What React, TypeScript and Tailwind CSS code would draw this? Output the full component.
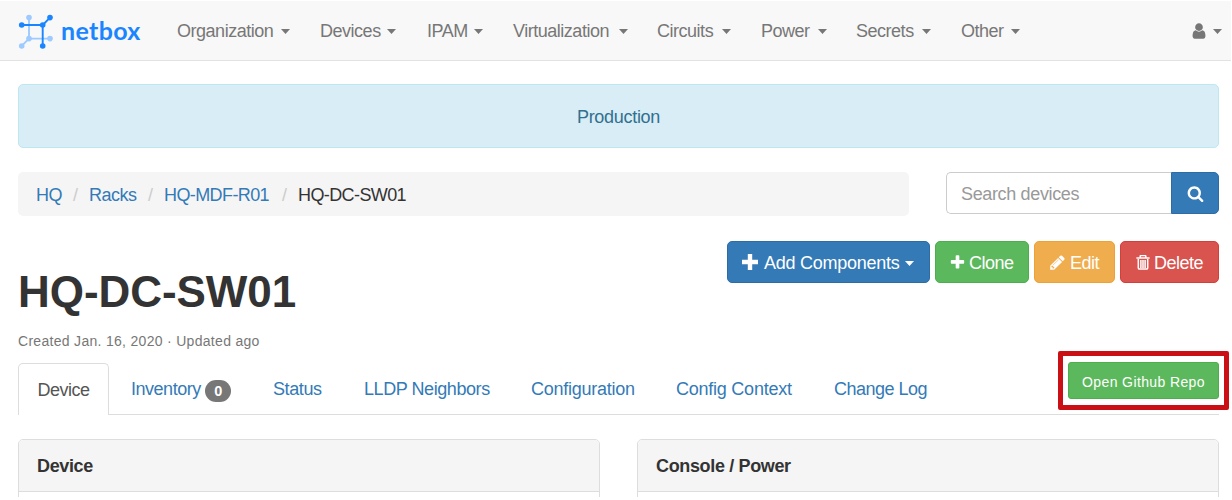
import React from "react";

const plusPath =
  "M1600 736v192q0 40-28 68t-68 28h-416v416q0 40-28 68t-68 28h-192q-40 0-68-28t-28-68v-416h-416q-40 0-68-28t-28-68v-192q0-40 28-68t68-28h416v-416q0-40 28-68t68-28h192q40 0 68 28t28 68v416h416q40 0 68 28t28 68z";
const userPath =
  "M1536 1399q0 109-62.5 187t-150.5 78h-854q-88 0-150.5-78t-62.5-187q0-85 8.5-160.5t31.5-152 58.5-131 94-89 134.5-34.5q131 128 313 128t313-128q76 0 134.5 34.5t94 89 58.5 131 31.5 152 8.5 160.5zm-256-887q0 159-112.5 271.5t-271.5 112.5-271.5-112.5-112.5-271.5 112.5-271.5 271.5-112.5 271.5 112.5 112.5 271.5z";
const searchPath =
  "M1216 832q0-185-131.5-316.5t-316.5-131.5-316.5 131.5-131.5 316.5 131.5 316.5 316.5 131.5 316.5-131.5 131.5-316.5zm512 832q0 52-38 90t-90 38q-54 0-90-38l-343-342q-179 124-399 124-143 0-273.5-55.5t-225-150-150-225-55.5-273.5 55.5-273.5 150-225 225-150 273.5-55.5 273.5 55.5 225 150 150 225 55.5 273.5q0 220-124 399l343 343q37 37 37 90z";
const pencilPath =
  "M491 1536l91-91-235-235-91 91v107h128v128h107zm523-928q0-22-22-22-10 0-17 7l-542 542q-7 7-7 17 0 22 22 22 10 0 17-7l542-542q7-7 7-17zm-54-192l416 416-832 832h-416v-416zm683 96q0 53-37 90l-166 166-416-416 166-165q36-38 90-38 53 0 91 38l235 234q37 39 37 91z";

function Glyph({ d, className }: { d: string; className: string }) {
  return (
    <svg viewBox="0 0 1792 1792" fill="currentColor" className={className}>
      <path d={d} />
    </svg>
  );
}

function Trash() {
  return (
    <svg viewBox="0 0 14 15" className="h-[15px] w-[14px] shrink-0">
      <path
        d="M4.2 2.4V1.1Q4.2.6 4.8.6h4.4q.6 0 .6.5V2.4M.4 3h13.2"
        fill="none"
        stroke="currentColor"
        strokeWidth="1.5"
      />
      <path
        d="M2.3 4v8.9q0 1.2 1.2 1.2h7q1.2 0 1.2-1.2V4M4.9 5v8M7 5v8M9.1 5v8"
        fill="none"
        stroke="currentColor"
        strokeWidth="1.5"
      />
    </svg>
  );
}

function Caret() {
  return (
    <svg viewBox="0 0 9 5" className="mt-px h-[5px] w-[9px] shrink-0">
      <path d="M0 0h9L4.5 5z" fill="currentColor" />
    </svg>
  );
}

function Logo() {
  return (
    <svg viewBox="0 -0.6 36 36" className="h-9 w-9 shrink-0">
      <g stroke="#9dcaff" fill="#9dcaff" strokeWidth="1.9">
        <path d="M11 4v21h21M11 25l-7.5 7.5" fill="none" />
        <circle cx="11" cy="4" r="2.8" stroke="none" />
        <circle cx="11" cy="25" r="2.8" stroke="none" />
        <circle cx="32" cy="25" r="2.8" stroke="none" />
        <circle cx="3.7" cy="32.4" r="2.8" stroke="none" />
      </g>
      <g stroke="#1a85ff" fill="#1a85ff" strokeWidth="1.9">
        <path d="M3.7 11.4h21v21M24.7 11.4 32 4" fill="none" />
        <circle cx="3.7" cy="11.4" r="2.8" stroke="none" />
        <circle cx="24.7" cy="11.4" r="2.8" stroke="none" />
        <circle cx="32" cy="4" r="2.8" stroke="none" />
        <circle cx="24.7" cy="32.4" r="2.8" stroke="none" />
      </g>
    </svg>
  );
}

const menus = [
  { label: "Organization", box: "w-[143px]", text: "w-[104px]" },
  { label: "Devices", box: "w-[107px]", text: "w-[67px]" },
  { label: "IPAM", box: "w-[86px]", text: "w-[47px]" },
  { label: "Virtualization", box: "w-[144px]", text: "w-[106px]" },
  { label: "Circuits", box: "w-[104px]", text: "w-[65px]" },
  { label: "Power", box: "w-[95px]", text: "w-[57px]" },
  { label: "Secrets", box: "w-[105px]", text: "w-[66px]" },
  { label: "Other", box: "w-[80px]", text: "w-[50px]" },
];

const tabs = [
  { label: "Status", box: "w-[91px] tracking-[-0.4px]" },
  { label: "LLDP Neighbors", box: "w-[167px] tracking-[-0.43px]" },
  { label: "Configuration", box: "w-[145px] tracking-[-0.26px]" },
  { label: "Config Context", box: "w-[158px] tracking-[-0.24px]" },
  { label: "Change Log", box: "w-[110px] tracking-[-0.5px]" },
];

export default function App() {
  return (
    <div className="h-[500px] w-[1232px] overflow-hidden bg-white font-['Liberation_Sans',Arial,sans-serif] text-[18px] leading-6 tracking-[-0.48px] text-[#333]">
      <div className="flex h-[497px] w-[1231px] flex-col overflow-hidden pt-px">
        <nav className="flex h-[60px] shrink-0 items-center border-b border-[#e2e2e2] bg-[#f8f8f8] pl-[18px] text-[#777]">
          <Logo />
          <span className="ml-[7px] w-[116px] pb-0.5 font-[Lato] text-[25px] font-bold leading-7 tracking-[0.35px] text-[#1a85ff]">
            netbox
          </span>
          {menus.map((m) => (
            <div key={m.label} className={`${m.box} flex shrink-0 items-center`}>
              <span className={`${m.text} whitespace-nowrap`}>{m.label}</span>
              <Caret />
            </div>
          ))}
          <div className="ml-auto flex items-center gap-[5px] pr-[9px]">
            <Glyph d={userPath} className="h-[18px] w-[18px]" />
            <Caret />
          </div>
        </nav>

        <div className="mt-[23px] mr-[12px] ml-[18px] flex h-16 shrink-0 items-center justify-center rounded-[5px] border border-[#bce8f1] bg-[#d9edf7] pt-0.5 tracking-[-0.3px] text-[#31708f]">
          Production
        </div>

        <div className="mt-6 mr-[12px] ml-[18px] flex shrink-0 items-start justify-between">
          <div className="flex h-11 w-[891px] items-center rounded-[5px] bg-[#f5f5f5] pl-[18px] pt-0.5 text-[#337ab7]">
            <span className="w-[37px]">HQ</span>
            <span className="w-[16px] text-[#ccc]">/</span>
            <span className="w-[59px]">Racks</span>
            <span className="w-[16px] text-[#ccc]">/</span>
            <span className="w-[118px] whitespace-nowrap tracking-[-0.6px]">HQ-MDF-R01</span>
            <span className="w-[16px] text-[#ccc]">/</span>
            <span className="tracking-[-0.6px] text-[#333]">HQ-DC-SW01</span>
          </div>
          <div className="flex h-[42px] w-[273px]">
            <div className="flex flex-1 items-center rounded-l-[5px] border border-r-0 border-[#ccc] pl-[14px] pt-0.5 tracking-[-0.35px] text-[#999]">
              Search devices
            </div>
            <div className="flex w-12 items-center justify-center rounded-r-[5px] border border-[#2e6da4] bg-[#337ab7] text-white">
              <Glyph d={searchPath} className="h-[17px] w-[17px]" />
            </div>
          </div>
        </div>

        <div className="mr-[12px] ml-[18px] flex h-[144px] shrink-0 items-start justify-between pt-[25px]">
          <div className="pt-[25px]">
            <h1 className="text-[44px] font-bold leading-[52px] tracking-[-0.05px]">HQ-DC-SW01</h1>
            <p className="mt-[13px] text-[14px] leading-5 tracking-[0.3px] text-[#777]">
              Created Jan. 16, 2020 · Updated ago
            </p>
          </div>
          <div className="flex h-[42px] text-white">
            <div className="mr-[5px] flex w-[203px] items-center rounded-[5px] border border-[#2e6da4] bg-[#337ab7] pl-[14px] pt-px">
              <svg viewBox="0 0 16 16" className="mr-[6px] mb-px h-4 w-4 shrink-0">
                <path d="M8 0v16M0 8h16" stroke="currentColor" strokeWidth="4.4" />
              </svg>
              <span className="w-[141px] whitespace-nowrap tracking-[-0.26px]">Add Components</span>
              <Caret />
            </div>
            <div className="mr-[5px] flex w-[94px] items-center rounded-[5px] border border-[#4cae4c] bg-[#5cb85c] pl-[13px] pt-px">
              <Glyph d={plusPath} className="mr-[3px] h-[17px] w-[17px]" />
              Clone
            </div>
            <div className="mr-[5px] flex w-[81px] items-center rounded-[5px] border border-[#eea236] bg-[#f0ad4e] pl-[14px] pt-px">
              <Glyph d={pencilPath} className="mr-[4px] h-[17px] w-[17px]" />
              Edit
            </div>
            <div className="flex w-[99px] items-center rounded-[5px] border border-[#d43f3a] bg-[#d9534f] pl-[15px] pt-px">
              <Trash />
              <span className="ml-[4px]">Delete</span>
            </div>
          </div>
        </div>

        <div className="relative mr-[12px] ml-[18px] flex h-[55px] shrink-0 items-end border-b border-[#ddd]">
          <div className="-mb-px flex h-[52px] w-[91px] items-center justify-center rounded-t-[5px] border border-b-0 border-[#ddd] bg-white text-[#555]">
            Device
          </div>
          <div className="flex h-[51px] flex-1 items-center pl-[22px] text-[#337ab7]">
            <span className="w-[74px]">Inventory</span>
            <span className="mt-1 mr-[42px] flex h-[22px] w-[26px] items-center justify-center rounded-full bg-[#777] text-[14.5px] font-bold text-white">
              0
            </span>
            {tabs.map((t) => (
              <span key={t.label} className={`${t.box} shrink-0 whitespace-nowrap`}>
                {t.label}
              </span>
            ))}
          </div>
          <div className="absolute -top-[9px] -right-[10px] flex h-[59px] w-[171px] items-center justify-center rounded-[2px] border-[5px] border-[#cb1015]">
            <div className="flex h-[37px] w-[151px] items-center justify-center rounded-[3px] border border-[#4cae4c] bg-[#5cb85c] pt-0.5 text-[14px] tracking-[0.38px] text-white">
              Open Github Repo
            </div>
          </div>
        </div>

        <div className="mt-6 mr-[12px] ml-[18px] flex flex-1 justify-between">
          {["Device", "Console / Power"].map((title) => (
            <section
              key={title}
              className="h-[100px] w-[582px] overflow-hidden rounded-t-[5px] border border-[#ddd]"
            >
              <h2 className="flex h-[52px] items-center border-b border-[#ddd] bg-[#f5f5f5] pl-[18px] pt-px font-bold tracking-[-0.35px]">
                {title}
              </h2>
            </section>
          ))}
        </div>
      </div>
    </div>
  );
}
